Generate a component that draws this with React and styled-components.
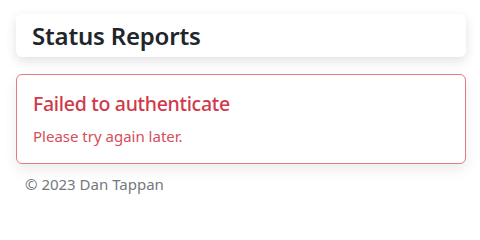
import React from "react";
import styled, { createGlobalStyle } from "styled-components";

const Global = createGlobalStyle`
  html, body { margin: 0; padding: 0; background: #ffffff; }
  body { font-family: "Noto Sans", "Open Sans", sans-serif; }
`;

const Page = styled.div`
  display: flex;
  flex-direction: column;
  padding: 14px 16px 0 16px;
  width: 450px;
`;

const HeaderCard = styled.header`
  background: #fff;
  border-radius: 6px;
  box-shadow: 0 4px 12px rgba(0, 0, 0, 0.12);
  height: 43px;
  display: flex;
  align-items: center;
  padding: 0 16px;
`;

const Title = styled.h1`
  margin: 0;
  font-size: 24px;
  font-weight: 600;
  color: #212529;
  letter-spacing: -0.2px;
`;

const ErrorCard = styled.section`
  margin-top: 17px;
  border: 1px solid #e07b86;
  border-radius: 6px;
  background: #fff;
  box-shadow: 0 6px 14px rgba(0, 0, 0, 0.08);
  padding: 16px 16px 0 16px;
  height: 72px;
`;

const ErrorTitle = styled.h2`
  margin: 0;
  font-size: 19.5px;
  font-weight: 500;
  color: #d0394b;
  line-height: 26px;
  letter-spacing: -0.3px;
`;

const ErrorText = styled.p`
  margin: 9px 0 0 0;
  font-size: 15px;
  color: #d64d5b;
  line-height: 20px;
`;

const Footer = styled.footer`
  margin-top: 10px;
  padding-left: 9px;
  font-size: 15px;
  color: #74797e;
  line-height: 20px;
`;

export default function App() {
  return (
    <>
      <Global />
      <Page>
        <HeaderCard>
          <Title>Status Reports</Title>
        </HeaderCard>
        <ErrorCard>
          <ErrorTitle>Failed to authenticate</ErrorTitle>
          <ErrorText>Please try again later.</ErrorText>
        </ErrorCard>
        <Footer>© 2023 Dan Tappan</Footer>
      </Page>
    </>
  );
}
